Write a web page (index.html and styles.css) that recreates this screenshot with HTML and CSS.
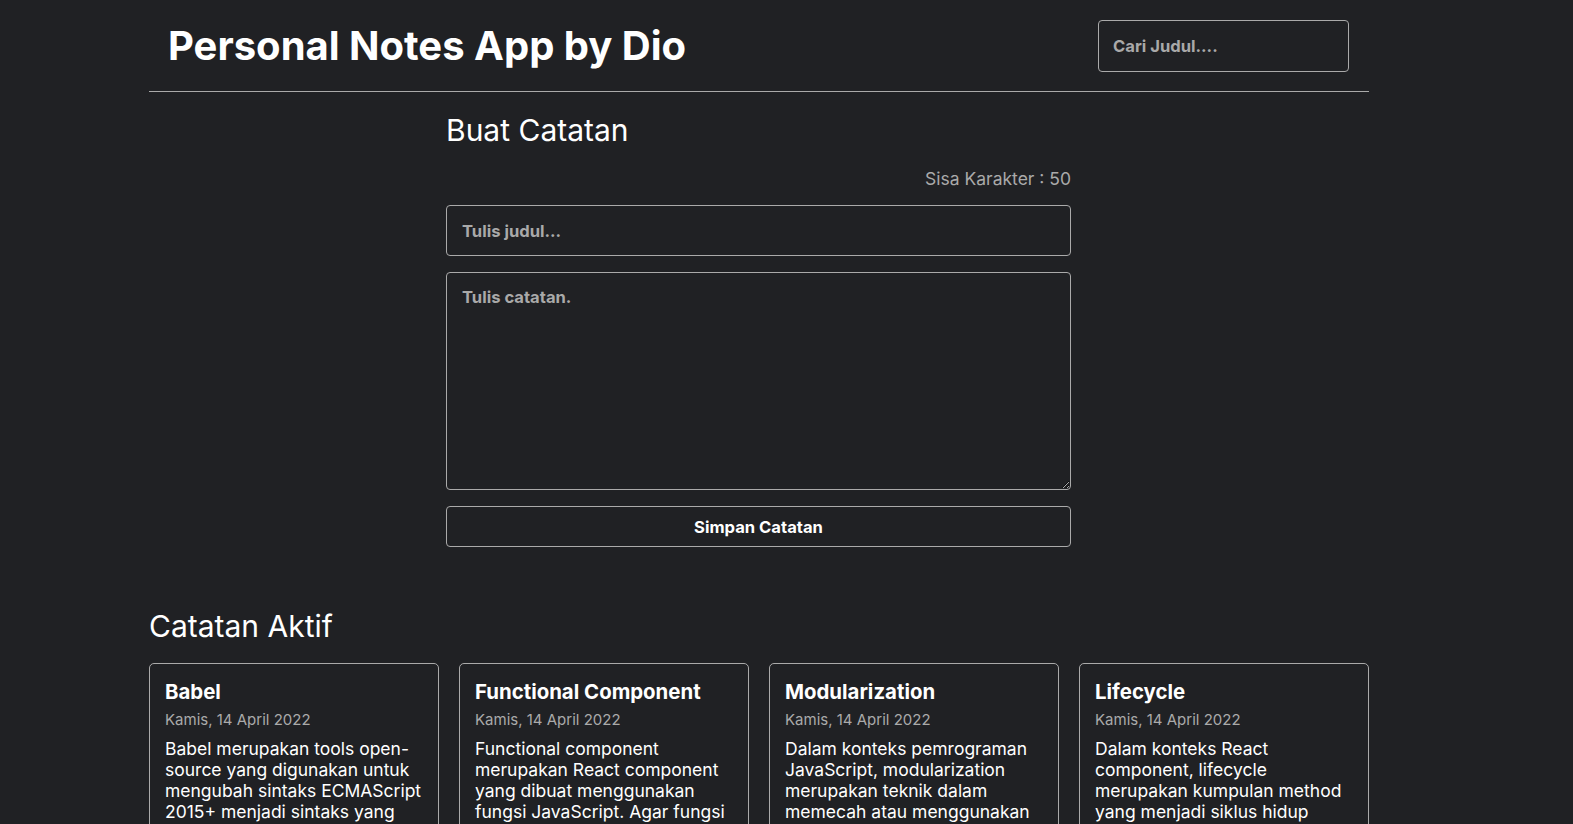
FILE: index.html
```html
<!DOCTYPE html>
<html lang="id">
<head>
<meta charset="utf-8">
<title>Personal Notes App by Dio</title>
<link rel="stylesheet" href="styles.css">
</head>
<body>
<div class="app">
  <header class="app-header">
    <h1 class="app-title">Personal Notes App by Dio</h1>
    <div class="search">
      <input type="text" placeholder="Cari Judul....">
    </div>
  </header>
  <main class="app-body">
    <section class="note-input">
      <h2 class="section-title">Buat Catatan</h2>
      <form class="note-form">
        <p class="char-limit">Sisa Karakter : 50</p>
        <input class="field field-title" type="text" placeholder="Tulis judul...">
        <textarea class="field field-body" placeholder="Tulis catatan."></textarea>
        <button class="submit" type="button">Simpan Catatan</button>
      </form>
    </section>
    <h2 class="section-title">Catatan Aktif</h2>
    <div class="notes-list">
      <article class="note-item">
        <h3 class="note-title">Babel</h3>
        <p class="note-date">Kamis, 14 April 2022</p>
        <p class="note-body">Babel merupakan tools open-source yang digunakan untuk mengubah sintaks ECMAScript 2015+ menjadi sintaks yang didukung oleh JavaScript engine versi lama.</p>
      </article>
      <article class="note-item">
        <h3 class="note-title">Functional Component</h3>
        <p class="note-date">Kamis, 14 April 2022</p>
        <p class="note-body">Functional component merupakan React component yang dibuat menggunakan fungsi JavaScript. Agar fungsi JavaScript dapat disebut component ia harus mengembalikan React element dan dipanggil layaknya React component.</p>
      </article>
      <article class="note-item">
        <h3 class="note-title">Modularization</h3>
        <p class="note-date">Kamis, 14 April 2022</p>
        <p class="note-body">Dalam konteks pemrograman JavaScript, modularization merupakan teknik dalam memecah atau menggunakan kode dalam berkas JavaScript secara terpisah berdasarkan tanggung jawabnya masing-masing.</p>
      </article>
      <article class="note-item">
        <h3 class="note-title">Lifecycle</h3>
        <p class="note-date">Kamis, 14 April 2022</p>
        <p class="note-body">Dalam konteks React component, lifecycle merupakan kumpulan method yang menjadi siklus hidup mulai dari component dibuat (constructor), dicetak (render), pasca-cetak (componentDidMount), dan sebagainya.</p>
      </article>
    </div>
  </main>
</div>
</body>
</html>
```

FILE: styles.css
```css
* { box-sizing: border-box; }

html, body {
  margin: 0;
  background-color: #202124;
  color: #ffffff;
  font-family: "Inter", "Noto Sans", sans-serif;
}

.app {
  width: 1220px;
  margin-left: 149px;
}

.app-header {
  display: flex;
  align-items: center;
  justify-content: space-between;
  height: 92px;
  padding: 0 20px 0 19px;
  border-bottom: 1px solid #aaaaaa;
}

.app-title {
  margin: 0;
  font-size: 40px;
  font-weight: 700;
  letter-spacing: 0;
}

.search input {
  width: 251px;
  height: 52px;
  padding: 0 14px;
  background: transparent;
  border: 1px solid #aaaaaa;
  border-radius: 4px;
  color: #ffffff;
  font-family: "Inter", sans-serif;
  font-size: 16.6px;
  font-weight: 700;
}

.search input::placeholder,
.field::placeholder { color: #a9a9a9; opacity: 1; }

.note-input {
  width: 626px;
  margin: 0 auto;
  padding: 20px 1px 0 0;
}

.section-title {
  margin: 0;
  font-size: 30px;
  font-weight: 400;
  line-height: 36px;
}

.note-form {
  display: flex;
  flex-direction: column;
}

.char-limit {
  margin: 19px 0 14px;
  text-align: right;
  color: #aaaaaa;
  font-size: 17.5px;
  line-height: 24px;
}

.field {
  display: block;
  width: 100%;
  background: transparent;
  border: 1px solid #aaaaaa;
  border-radius: 4px;
  padding: 15px;
  color: #ffffff;
  font-family: "Inter", sans-serif;
  font-size: 16.6px;
  font-weight: 700;
}

.field-title { height: 51px; }

.field-body {
  height: 218px;
  margin-top: 16px;
  resize: vertical;
  padding-top: 14px;
}

.submit {
  margin-top: 16px;
  height: 41px;
  background: transparent;
  border: 1px solid #aaaaaa;
  border-radius: 4px;
  color: #ffffff;
  font-family: "Inter", sans-serif;
  font-size: 16.6px;
  font-weight: 700;
}

.app-body > .section-title {
  margin-top: 61px;
}

.notes-list {
  display: grid;
  grid-template-columns: repeat(4, 1fr);
  gap: 20px;
  margin-top: 19px;
}

.note-item {
  border: 1px solid #aaaaaa;
  border-radius: 5px;
  padding: 14px 14px 15px 15px;
}

.note-title {
  margin: 0;
  font-size: 20.4px;
  font-weight: 700;
  line-height: 28px;
}

.note-date {
  margin: 4px 0 0;
  color: #aaaaaa;
  font-size: 15px;
  line-height: 20px;
}

.note-body {
  margin: 8px 0 0;
  font-size: 17.5px;
  line-height: 21px;
}
```
